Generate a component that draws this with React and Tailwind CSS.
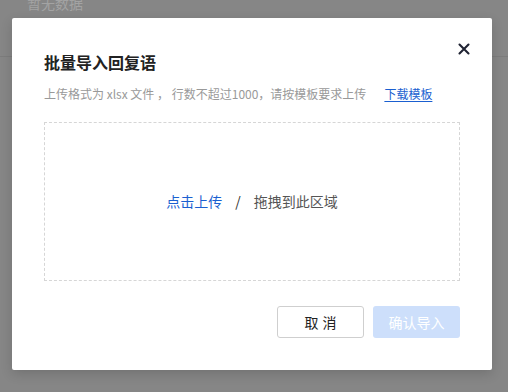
export default function App() {
  const font = { fontFamily: '"PingFang SC", "Noto Sans CJK SC", "Liberation Sans", sans-serif' }
  return (
    <div className="relative w-[508px] h-[392px] overflow-hidden bg-[#868686]" style={font}>
      {/* page behind the overlay */}
      <div className="absolute left-[27px] top-[-7px] text-[14px] text-[#a3a3a3]">暂无数据</div>
      <div className="absolute left-0 right-0 top-[56px] h-px bg-[#7c7c7c]" />

      <div className="absolute left-[12px] top-[18px] w-[480px] h-[352px] bg-white rounded-[2px] shadow-[0_4px_12px_rgba(0,0,0,0.15)] px-[32px] pt-[32px]">
        <button className="absolute right-[20px] top-[23px] w-[16px] h-[16px] flex items-center justify-center text-[#1f2333]">
          <svg width="12" height="12" viewBox="0 0 12 12" fill="none">
            <path d="M1.5 1.5 L10.5 10.5 M10.5 1.5 L1.5 10.5" stroke="currentColor" strokeWidth="2.1" strokeLinecap="round" />
          </svg>
        </button>

        <div className="text-[16px] font-bold text-[#222] leading-[24px]">批量导入回复语</div>
        <div className="mt-[10px] text-[12px] leading-[20px] text-[#999] flex">
          <span>上传格式为 xlsx 文件 ， 行数不超过1000，请按模板要求上传</span>
          <span className="ml-[18px] text-[#1a5fd0] underline underline-offset-2">下载模板</span>
        </div>

        <div className="mt-[18px] h-[159px] border border-dashed border-[#d6d6d6] flex items-center justify-center text-[14px]">
          <span className="text-[#1a5fd0]">点击上传</span>
          <span className="mx-[13px] text-[#333]">/</span>
          <span className="text-[#555]">拖拽到此区域</span>
        </div>

        <div className="mt-[25px] flex justify-end gap-[9px]">
          <button className="w-[87px] h-[32px] border border-[#cfcfcf] rounded-[3px] text-[14px] text-[#222] tracking-[4px] pl-[4px]">取消</button>
          <button className="w-[87px] h-[32px] rounded-[3px] bg-[#cddffb] text-[14px] text-white">确认导入</button>
        </div>
      </div>
    </div>
  )
}
